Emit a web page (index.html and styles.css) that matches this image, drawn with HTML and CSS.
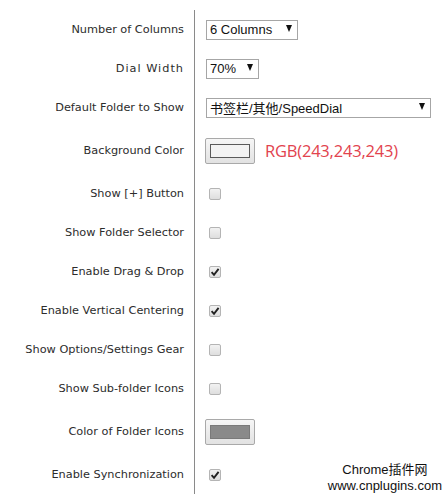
FILE: index.html
```html
<!DOCTYPE html>
<html>
<head>
<meta charset="utf-8">
<link rel="stylesheet" href="styles.css">
</head>
<body>
<div class="options">
  <div class="row">
    <div class="label">Number of Columns</div>
    <div class="ctrl"><div class="select w-cols"><span>6 Columns</span><span class="arrow"></span></div></div>
  </div>
  <div class="row">
    <div class="label wide">Dial Width</div>
    <div class="ctrl"><div class="select w-dial"><span>70%</span><span class="arrow"></span></div></div>
  </div>
  <div class="row">
    <div class="label">Default Folder to Show</div>
    <div class="ctrl"><div class="select w-folder"><span>书签栏/其他/SpeedDial</span><span class="arrow"></span></div></div>
  </div>
  <div class="row tall">
    <div class="label">Background Color</div>
    <div class="ctrl"><div class="colorbtn"><span class="swatch light"></span></div><span class="rgb">RGB(243,243,243)</span></div>
  </div>
  <div class="row">
    <div class="label">Show [+] Button</div>
    <div class="ctrl"><span class="cb"></span></div>
  </div>
  <div class="row">
    <div class="label">Show Folder Selector</div>
    <div class="ctrl"><span class="cb"></span></div>
  </div>
  <div class="row">
    <div class="label">Enable Drag &amp; Drop</div>
    <div class="ctrl"><span class="cb"><svg viewBox="0 0 12 12" width="12" height="12"><path d="M2.6 6.2 L5 8.8 L9.6 2.8" fill="none" stroke="#222" stroke-width="1.9"/></svg></span></div>
  </div>
  <div class="row">
    <div class="label">Enable Vertical Centering</div>
    <div class="ctrl"><span class="cb"><svg viewBox="0 0 12 12" width="12" height="12"><path d="M2.6 6.2 L5 8.8 L9.6 2.8" fill="none" stroke="#222" stroke-width="1.9"/></svg></span></div>
  </div>
  <div class="row">
    <div class="label">Show Options/Settings Gear</div>
    <div class="ctrl"><span class="cb"></span></div>
  </div>
  <div class="row">
    <div class="label">Show Sub-folder Icons</div>
    <div class="ctrl"><span class="cb"></span></div>
  </div>
  <div class="row tall">
    <div class="label">Color of Folder Icons</div>
    <div class="ctrl"><div class="colorbtn"><span class="swatch dark"></span></div></div>
  </div>
  <div class="row">
    <div class="label">Enable Synchronization</div>
    <div class="ctrl"><span class="cb"><svg viewBox="0 0 12 12" width="12" height="12"><path d="M2.6 6.2 L5 8.8 L9.6 2.8" fill="none" stroke="#222" stroke-width="1.9"/></svg></span></div>
  </div>
</div>
<div class="watermark">
  <div>Chrome插件网</div>
  <div>www.cnplugins.com</div>
</div>
</body>
</html>
```

FILE: styles.css
```css
html, body {
  margin: 0;
  padding: 0;
  background: #fff;
}
body {
  width: 447px;
  height: 495px;
  overflow: hidden;
  position: relative;
}
.options {
  padding-top: 10px;
  display: flex;
  flex-direction: column;
}
.row {
  display: flex;
  height: 39px;
}
.row.tall {
  height: 47px;
}
.label {
  width: 184px;
  padding-right: 10px;
  box-sizing: content-box;
  text-align: right;
  font-family: "DejaVu Sans", sans-serif;
  font-size: 11.3px;
  color: #2c2c2c;
  display: flex;
  align-items: center;
  justify-content: flex-end;
  white-space: nowrap;
}
.label.wide {
  letter-spacing: 1px;
}
.ctrl {
  border-left: 1px solid #8a8a8a;
  padding-left: 11px;
  display: flex;
  align-items: center;
  flex: 1;
}
.select {
  box-sizing: border-box;
  height: 20px;
  border: 1px solid #a6a6a6;
  background: #fff;
  display: flex;
  align-items: center;
  justify-content: space-between;
  padding: 0 5px 0 3px;
  font-family: "Liberation Sans", "Noto Sans CJK SC", sans-serif;
  font-size: 13px;
  color: #111;
}
.w-cols { width: 92px; }
.w-dial { width: 53px; }
.w-folder { width: 225px; }
.arrow {
  width: 0;
  height: 0;
  border-left: 3.5px solid transparent;
  border-right: 3.5px solid transparent;
  border-top: 7px solid #111;
  margin-top: -2px;
}
.colorbtn {
  box-sizing: border-box;
  width: 50px;
  height: 26px;
  margin-left: -1px;
  border: 1px solid #a9a9a9;
  border-radius: 2px;
  background: linear-gradient(#f6f6f6, #e2e2e2);
  display: flex;
  align-items: center;
  justify-content: center;
}
.swatch {
  box-sizing: border-box;
  width: 40px;
  height: 14px;
  border: 1px solid #5a5a5a;
}
.swatch.light { background: #f3f3f3; }
.swatch.dark { background: #8a8a8a; border-color: #7a7a7a; }
.rgb {
  margin-left: 10px;
  font-family: "Open Sans", sans-serif;
  font-size: 16.5px;
  color: #e2434e;
  letter-spacing: -0.2px;
}
.cb {
  box-sizing: border-box;
  width: 12px;
  height: 12px;
  margin-left: 3px;
  border: 1px solid #b4b4b4;
  border-radius: 2px;
  background: linear-gradient(#f2f2f2, #dedede);
  display: flex;
  align-items: center;
  justify-content: center;
  overflow: visible;
}
.cb svg {
  flex: none;
}
.watermark {
  position: absolute;
  right: 5px;
  bottom: 1px;
  text-align: center;
  font-family: "Liberation Sans", "Noto Sans CJK SC", sans-serif;
  font-size: 13px;
  line-height: 16px;
  color: #111;
}
```
